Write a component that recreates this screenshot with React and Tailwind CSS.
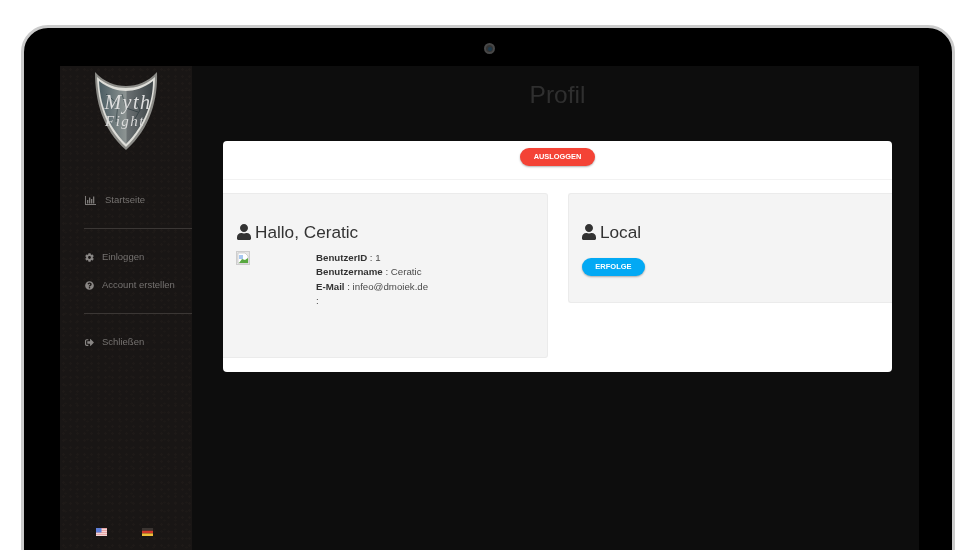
import React from "react";
import { FaUser, FaCog, FaQuestionCircle, FaSignOutAlt } from "react-icons/fa";

const font = { fontFamily: '"Liberation Sans", Arial, sans-serif' };

function ChartIcon() {
  return (
    <svg width="11" height="9" viewBox="0 0 11 9" className="shrink-0" fill="#7d7a78">
      <path d="M0 0h1v8h10v1H0z" />
      <rect x="2" y="4" width="1.3" height="3.5" />
      <rect x="4" y="1.5" width="1.3" height="6" />
      <rect x="6" y="3" width="1.3" height="4.5" />
      <rect x="8" y="0.5" width="1.3" height="7" />
    </svg>
  );
}

function Shield() {
  return (
    <svg width="64" height="78" viewBox="0 0 64 78" className="block">
      <defs>
        <linearGradient id="sh" x1="0" x2="1" y1="0" y2="0">
          <stop offset="0" stopColor="#4a5c62" />
          <stop offset="0.5" stopColor="#8d9493" />
          <stop offset="0.52" stopColor="#6a7072" />
          <stop offset="1" stopColor="#3d4447" />
        </linearGradient>
      </defs>
      <path d="M1 0 C10 10 21 14 32 14 C43 14 54 10 63 0 C64 26 57 56 32 78 C8 57 1 28 1 0Z" fill="#8b8b87" />
      <path d="M3 5 C12 13 22 16 32 16 C42 16 52 13 61 5 C61 28 53 55 32 75 C11 55 4 30 3 5Z" fill="#deded9" />
      <path d="M5 9 C14 16 24 19 32 19 C40 19 50 16 59 9 C59 30 51 53 32 72 C13 53 6 31 5 9Z" fill="url(#sh)" />
      <path d="M12 22 L24 32 L22 50 M40 26 L46 38 L38 52 M28 22 L32 36 L44 40" stroke="#16252a" strokeWidth="0.8" fill="none" opacity="0.6" />
      <text x="34" y="37" textAnchor="middle" fontFamily='"Liberation Serif", serif' fontStyle="italic" fontSize="20" letterSpacing="1.5" fill="#dedede">Myth</text>
      <text x="31" y="54" textAnchor="middle" fontFamily='"Liberation Serif", serif' fontStyle="italic" fontSize="15" fill="#dadada" letterSpacing="1.5">Fight</text>
    </svg>
  );
}

function FlagUS() {
  return (
    <svg width="11" height="8" viewBox="0 0 11 8" className="block">
      <rect width="11" height="8" fill="#e8a6a6" />
      <path d="M0 1.5h11M0 3.5h11M0 5.5h11M0 7.5h11" stroke="#f3dada" strokeWidth="0.9" />
      <rect width="5.5" height="4.5" fill="#5f7fd8" />
    </svg>
  );
}

function FlagDE() {
  return (
    <svg width="11" height="8" viewBox="0 0 11 8" className="block">
      <rect width="11" height="2.7" fill="#3a3431" />
      <rect y="2.7" width="11" height="2.7" fill="#d2392b" />
      <rect y="5.4" width="11" height="2.6" fill="#eebf3a" />
    </svg>
  );
}

function BrokenImage() {
  return (
    <svg width="14" height="14" viewBox="0 0 14 14" className="block shrink-0">
      <rect x="0.5" y="0.5" width="13" height="13" fill="#e6e6e6" stroke="#cdcdcd" />
      <path d="M2 2h7l3 3v7H2z" fill="#fff" stroke="#b9b9b9" strokeWidth="0.6" />
      <path d="M3 4h4v4H3z" fill="#a8c8f0" />
      <path d="M3 12l3-4 3 1 3-2v5z" fill="#58a83f" />
    </svg>
  );
}

function NavItem({ icon, label, gap, className = "" }) {
  return (
    <div className={"flex items-center h-[14px] pl-[1px] text-[9.5px] text-[#757270] " + gap + " " + className}>
      {icon}
      <span>{label}</span>
    </div>
  );
}

function Panel({ className = "", children }) {
  return (
    <div className={"bg-[#f4f4f4] border border-[#ebebeb] rounded-[3px] pt-[26px] " + className}>
      {children}
    </div>
  );
}

function Heading({ children }) {
  return (
    <div className="flex items-center gap-[3px] h-[24px] text-[17.2px] text-[#333333]">
      <FaUser size={16} color="#333333" className="shrink-0" />
      <span className="mt-[1px]">{children}</span>
    </div>
  );
}

export default function App() {
  return (
    <div style={font} className="w-[976px] h-[550px] overflow-hidden bg-white pt-[25px] pl-[21px] pr-[21px]">
      <div className="h-[560px] blur-[0.35px] bg-black border-[3px] border-[#cbcbcb] rounded-t-[27px] flex flex-col pl-[36px] pr-[33px]">
        <div className="h-[38px] flex items-center justify-center">
          <div className="mt-[3px] w-[11px] h-[11px] rounded-full bg-[#333333] border-[2px] border-[#484848] flex items-center justify-center">
            <div className="w-[4px] h-[4px] rounded-full bg-[#1d3a4d]" />
          </div>
        </div>
        <div className="flex-1 flex">
          {/* Sidebar */}
          <aside className="w-[132px] h-[484px] bg-[#191615] bg-[radial-gradient(#1e1a18_1px,transparent_1.5px),radial-gradient(#1d1917_1px,transparent_1.5px)] bg-[length:7px_7px,11px_9px] flex flex-col">
            <div className="flex justify-center pt-[6px] h-[125px]">
              <Shield />
            </div>
            <div className="pl-[24px]">
              <div className="h-[2px]" />
              <NavItem icon={<ChartIcon />} label="Startseite" gap="gap-[9px]" />
              <div className="h-[1px] bg-[#3b3735] mt-[21px] mb-[21px]" />
              <NavItem icon={<FaCog size={9} color="#8a8785" className="shrink-0" />} label="Einloggen" gap="gap-[8px]" />
              <NavItem icon={<FaQuestionCircle size={9} color="#8a8785" className="shrink-0" />} label="Account erstellen" gap="gap-[8px]" className="mt-[14px]" />
              <div className="h-[1px] bg-[#3b3735] mt-[21px] mb-[21px]" />
              <NavItem icon={<FaSignOutAlt size={9} color="#8a8785" className="shrink-0" />} label="Schließen" gap="gap-[8px]" />
            </div>
            <div className="mt-[179px] flex pl-[36px] gap-[35px]">
              <FlagUS />
              <FlagDE />
            </div>
          </aside>
          {/* Main */}
          <main className="flex-1 h-[484px] bg-[#0d0d0d] pl-[31px] pr-[27px] pt-[15px]">
            <h1 className="h-[28px] leading-[28px] text-center text-[24.5px] text-[#2f2f2f]">Profil</h1>
            <div className="mt-[32px] h-[231px] bg-white rounded-[4px] overflow-hidden">
              <div className="h-[39px] border-b border-[#f2f2f2] flex justify-center pt-[7px]">
                <button className="h-[18px] w-[75px] rounded-full bg-[#f44336] text-white text-[7.4px] font-bold shadow-[0_1px_2px_rgba(0,0,0,0.3)]">
                  AUSLOGGEN
                </button>
              </div>
              <div className="flex items-start justify-between pt-[13px]">
                <Panel className="w-[325px] h-[165px] pl-[13px] border-l-0 rounded-l-none">
                  <Heading>Hallo, Ceratic</Heading>
                  <div className="flex mt-[7px]">
                    <BrokenImage />
                    <div className="ml-[66px] text-[9.7px] leading-[14.3px] text-[#4a4a4a]">
                      <div><b className="text-[#333333]">BenutzerID</b> : 1</div>
                      <div><b className="text-[#333333]">Benutzername</b> : Ceratic</div>
                      <div><b className="text-[#333333]">E-Mail</b> : infeo@dmoiek.de</div>
                      <div>:</div>
                    </div>
                  </div>
                </Panel>
                <Panel className="w-[324px] h-[110px] pl-[12px] border-r-0 rounded-r-none">
                  <Heading>Local</Heading>
                  <button className="block mt-[14px] ml-[1px] h-[18px] w-[63px] rounded-full bg-[#03a9f4] text-white text-[7.5px] font-bold shadow-[0_1px_2px_rgba(0,0,0,0.3)]">
                    ERFOLGE
                  </button>
                </Panel>
              </div>
            </div>
          </main>
        </div>
      </div>
    </div>
  );
}
